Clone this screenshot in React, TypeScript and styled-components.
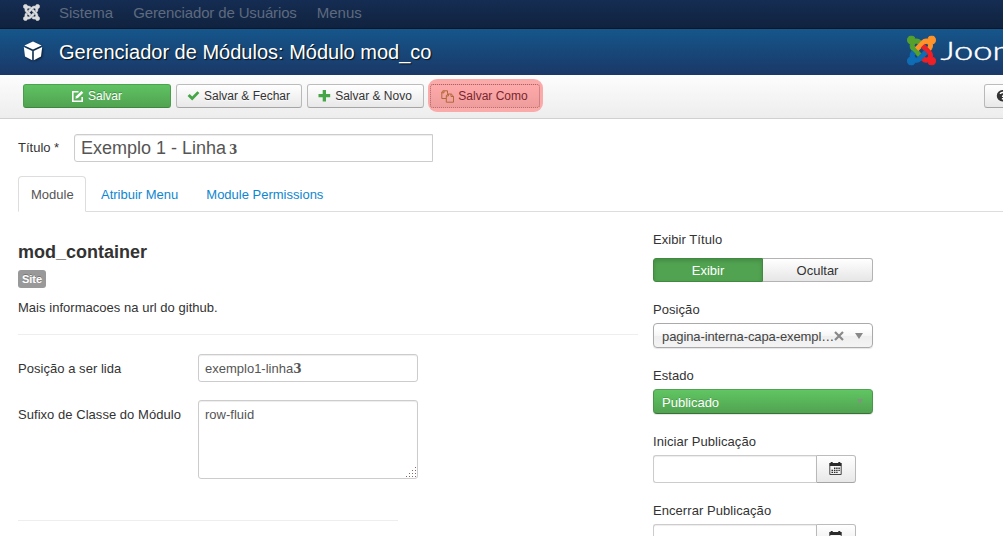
import React from 'react';
import styled, { createGlobalStyle, css } from 'styled-components';

const Global = createGlobalStyle`
  * { box-sizing: border-box; }
  html, body { margin: 0; height: 536px; overflow: hidden; background: #fff; }
  body { font: 13px/18px "Liberation Sans", Arial, sans-serif; color: #333; }
  #root { height: 536px; overflow: hidden; }
`;

const Page = styled.div`
  width: 1003px;
  height: 536px;
  overflow: hidden;
`;

const TopBar = styled.nav`
  display: flex;
  align-items: center;
  height: 29px;
  padding: 0 0 3px 23px;
  background: linear-gradient(#152d53, #10223e);
  border-bottom: 1px solid #0b1629;
  color: #5e6a7f;
  font-size: 15px;
`;

const BrandIcon = styled.svg`
  width: 17px;
  height: 17px;
  margin-right: 19px;
  fill: #dcdcdc;
  stroke: #dcdcdc;
  stroke-width: 10;
`;

const TopItem = styled.span<{ $tracking?: number }>`
  margin-right: 20px;
  letter-spacing: ${p => p.$tracking || 0}px;
  white-space: nowrap;
`;

const Header = styled.header`
  display: flex;
  align-items: center;
  height: 46px;
  padding-left: 23px;
  background: linear-gradient(#15568b, #1a3867);
  color: #fff;
`;

const HeaderIcon = styled.svg`
  width: 20px;
  height: 20px;
  margin: 0 16px 2px 0;
  filter: drop-shadow(1px 1px 1px rgba(0, 0, 0, 0.6));
`;

const PageTitle = styled.h1`
  flex: 1;
  margin: 0;
  font-size: 20px;
  line-height: 28px;
  font-weight: 400;
  text-shadow: 1px 1px 1px rgba(0, 0, 0, 0.8);
`;

const Logo = styled.svg`
  width: 97px;
  height: 36px;
  margin-bottom: 4px;
`;

const Toolbar = styled.div`
  display: flex;
  gap: 5px;
  height: 44px;
  padding: 9px 0 0 23px;
  background: linear-gradient(#fdfdfd, #ededed);
  border-bottom: 1px solid #d0d0d0;
`;

const Button = styled.button<{ $width: number; $primary?: boolean }>`
  display: flex;
  flex: none;
  align-items: center;
  justify-content: center;
  gap: 4px;
  width: ${p => p.$width}px;
  height: 24px;
  padding: 0 1px 0 0;
  border: 1px solid #b7b7b7;
  border-color: #bcbcbc #b9b9b9 #a5a5a5;
  border-radius: 3px;
  background: linear-gradient(#fff, #e8e8e8);
  color: #333;
  font: 12px/18px "Liberation Sans", Arial, sans-serif;
  white-space: nowrap;
  text-shadow: 0 1px 1px rgba(255, 255, 255, 0.75);
  ${p => p.$primary && css`
    border-color: #4da34d #4b9c4b #3d873d;
    background: linear-gradient(#5fc262, #51a351);
    color: #fff;
    text-shadow: 0 -1px 0 rgba(0, 0, 0, 0.25);
  `}
  svg { width: 13px; height: 13px; flex: none; }
`;

const Highlight = styled.div`
  flex: none;
  height: 33px;
  margin: -5px 0 0 -1px;
  padding: 5px 3px 4px 2px;
  border-radius: 9px;
  background: #fbaaaa;
  ${Button} {
    border: 1px dotted #a86464;
    background: linear-gradient(#ffaaaa, #ee9c9c);
    color: #79262e;
    text-shadow: none;
  }
`;

const HelpButton = styled(Button)`
  margin-left: auto;
  margin-right: -21px;
  justify-content: flex-start;
  padding-left: 11px;
`;

const TitleRow = styled.div`
  display: flex;
  align-items: center;
  height: 28px;
  margin: 15px 0 0 18px;
`;

const TitleLabel = styled.label`
  width: 56px;
`;

const Field = styled.div<{ $width: number; $height?: number; $large?: boolean }>`
  position: relative;
  flex: none;
  width: ${p => p.$width}px;
  height: ${p => p.$height || 28}px;
  padding: 5px 6px;
  border: 1px solid #ccc;
  border-radius: 3px;
  background: #fff;
  box-shadow: inset 0 1px 1px rgba(0, 0, 0, 0.075);
  color: #555;
  white-space: nowrap;
  ${p => p.$large && css`
    padding: 2px 6px;
    font-size: 18px;
    line-height: 22px;
    border-radius: 3px 0 0 3px;
  `}
`;

const Digit = styled.b<{ $size: number; $gap?: number }>`
  margin-left: ${p => p.$gap || 0}px;
  font-family: "DejaVu Serif", serif;
  font-size: ${p => p.$size}px;
  line-height: 1;
`;

const Tabs = styled.div`
  display: flex;
  height: 36px;
  margin: 14px 0 0 18px;
  border-bottom: 1px solid #ddd;
`;

const Tab = styled.a<{ $active?: boolean }>`
  height: 36px;
  padding: 9px 12px 8px;
  margin-right: 2px;
  border: 1px solid transparent;
  color: #0e86cf;
  ${p => p.$active && css`
    width: 68px;
    border-color: #ddd #ddd #fff;
    border-radius: 4px 4px 0 0;
    background: #fff;
    color: #555;
  `}
`;

const Columns = styled.main`
  display: flex;
  padding-left: 18px;
`;

const MainColumn = styled.section`
  width: 635px;
  padding-top: 29px;
`;

const ModuleName = styled.h3`
  margin: 0;
  font-size: 18px;
  line-height: 22px;
`;

const Badge = styled.span`
  display: block;
  width: 28px;
  height: 18px;
  margin-top: 7px;
  border-radius: 3px;
  background: #999;
  color: #fff;
  font-size: 11px;
  font-weight: 700;
  text-align: center;
  text-shadow: 0 -1px 0 rgba(0, 0, 0, 0.25);
`;

const Description = styled.p`
  margin: 11px 0 0;
  letter-spacing: 0.03px;
`;

const Rule = styled.hr<{ $width: number; $top: number }>`
  width: ${p => p.$width}px;
  height: 1px;
  margin: ${p => p.$top}px 0 0;
  border: 0;
  background: #eee;
`;

const FormRow = styled.div<{ $top: number }>`
  display: flex;
  margin-top: ${p => p.$top}px;
`;

const FormLabel = styled.label`
  width: 180px;
  padding-top: 6px;
  letter-spacing: 0.04px;
`;

const Grip = styled.svg`
  position: absolute;
  right: 0;
  bottom: 0;
  width: 11px;
  height: 11px;
`;

const SideColumn = styled.aside`
  width: 220px;
  padding-top: 19px;
`;

const Group = styled.div<{ $height: number }>`
  height: ${p => p.$height}px;
`;

const SideLabel = styled.label<{ $gap: number }>`
  display: block;
  margin-bottom: ${p => p.$gap}px;
  letter-spacing: 0.06px;
`;

const Switch = styled.div`
  display: flex;
`;

const SwitchOption = styled.div<{ $on?: boolean }>`
  width: 110px;
  height: 24px;
  border: 1px solid #b3b3b3;
  border-left: 0;
  border-radius: 0 3px 3px 0;
  background: linear-gradient(#fff, #e6e6e6);
  line-height: 23px;
  text-align: center;
  ${p => p.$on && css`
    border: 1px solid #3f8a3f;
    border-radius: 3px 0 0 3px;
    background: #51a351;
    box-shadow: inset 0 2px 4px rgba(0, 0, 0, 0.15);
    color: #fff;
  `}
`;

const Select = styled.div<{ $green?: boolean }>`
  display: flex;
  align-items: center;
  height: 25px;
  padding: 2px 8px 0;
  border: 1px solid #aaa;
  border-radius: 4px;
  background: linear-gradient(#fff 20%, #f6f6f6 50%, #eee 52%, #f4f4f4 100%);
  box-shadow: 0 1px 1px rgba(0, 0, 0, 0.1);
  color: #444;
  ${p => p.$green && css`
    border-color: #51a351 #489748 #387038;
    background: linear-gradient(#60c562, #51a351);
    color: #fff;
    text-shadow: 0 -1px 0 rgba(0, 0, 0, 0.15);
  `}
`;

const SelectText = styled.span<{ $tracking?: number }>`
  flex: none;
  padding-top: 1px;
  letter-spacing: ${p => p.$tracking || 0}px;
  white-space: nowrap;
`;

const ClearIcon = styled.svg`
  width: 10px;
  height: 10px;
  margin: 0 0 2px;
`;

const Arrow = styled.span<{ $muted?: boolean }>`
  margin: 0 1px 2px auto;
  border: ${p => (p.$muted ? 3 : 4)}px solid transparent;
  border-top: ${p => (p.$muted ? '5px solid #7f957c' : '6px solid #888')};
  border-bottom: 0;
`;

const DateField = styled.div`
  display: flex;
  ${Field} { border-radius: 3px 0 0 3px; border-right: 0; }
  ${Button} { height: 28px; padding: 0 2px 2px 0; border-radius: 0 3px 3px 0; }
`;

const joomlaParts = [
  { color: '#56a12b', d: 'M.6 92.1C.6 58.8 27.4 32 60.4 32c30 0 54.5 21.9 59.2 50.2 32.6-7.6 67.1.6 96.5 30l-44.3 44.3c-20.5-20.5-42.6-16.3-55.4-3.5-14.3 14.3-14.3 37.9 0 52.2l99.5 99.5-44 44.3c-87.7-87.2-49.7-49.7-99.8-99.7-26.8-26.5-35-64.8-24.8-98.9C20.4 144.6.6 120.7.6 92.1z' },
  { color: '#ff9329', d: 'M130.1 208.5l44.3 44.3c10-10 89.7-89.7 99.7-99.8 14.3-14.3 37.6-14.3 51.9 0 12.8 12.8 17 35-3.5 55.4l44 44.3c31.2-31.2 38.5-67.6 28.9-101.2 29.2-4.1 51.9-29.2 51.9-59.5 0-33.2-26.8-60.1-59.8-60.1-30.3 0-55.4 22.5-59.5 51.6-33.8-9.9-71.7-1.5-98.3 25.1-18.3 19.1-71.1 71.5-99.6 99.9z' },
  { color: '#ed2025', d: 'M396.4 360.7c8.2-32.7-.9-68.5-26.3-93.9-11.8-12.2 5 4.7-99.5-99.7l-44.3 44.3 99.7 99.7c14.3 14.3 14.3 37.6 0 51.9-12.8 12.8-35 17-55.4-3.5l-44 44.3c27.6 30.2 68 38.8 102.7 28 5.5 27.4 29.7 48.1 58.9 48.1 33 0 59.8-26.8 59.8-60.1 0-30.2-22.5-55-51.6-59.1z' },
  { color: '#0f6db5', d: 'M312.1 307.6l-44-44.3c-87 86.4-50.4 50.4-99.7 99.8-14.3 14.3-37.6 14.3-51.9 0-13.1-13.4-16.9-35.3 3.2-55.4l-44-44.3c-30.2 30.2-38 65.2-29.5 98.3-26.7 6-46.2 29.9-46.2 58.2C0 453.2 26.8 480 59.8 480c28.6 0 52.5-19.8 58.6-46.7 32.7 8.2 68.5-.6 94.2-26 32.1-32 12.2-12.4 99.5-99.7z' },
];

const EditIcon = () => (
  <svg viewBox="0 0 13 13" fill="none" stroke="#fff">
    <path d="M7.5 1.8H1.8v9.4h9.4V7" strokeWidth="1.6" />
    <path d="M4.4 8.8l.6-2.5L10.5.9l1.8 1.8-5.4 5.4z" fill="#fff" stroke="none" />
  </svg>
);

const CheckIcon = () => (
  <svg viewBox="0 0 13 13"><path d="M.6 6l2.1-2 2.5 2.4L10.4 1.2l2 1.9-7.2 7.5z" fill="#46a546" /></svg>
);

const PlusIcon = () => (
  <svg viewBox="0 0 13 13"><path d="M4.7 0h3.3v4.1h4.2v3.2H8v4.1H4.7V7.3H.5V4.1h4.2z" fill="#46a546" /></svg>
);

const CopyIcon = () => (
  <svg viewBox="0 0 13 13" fill="none" stroke="#b06a35">
    <path d="M5 8.5H.8V1.9L2 .8h4.5v3M3 .8v2H.8" />
    <path d="M7 4h3.3l2.2 2.2v6H5.3V5.6zM10 4v2.5h2.5M7.4 4v2H5.3" />
  </svg>
);

const CalendarIcon = () => (
  <svg viewBox="0 0 13 13" fill="#2b2b2b">
    <path d="M.3 1h1.4V0h2v1h5.6V0h2v1h1.4v3H.3z" />
    <path d="M.8 4v8.5h11.4V4" fill="none" stroke="#333" strokeWidth=".9" />
    <path d="M5 5.5h1.4V7H5zM7.2 5.5h1.4V7H7.2zM9.4 5.5h1.4V7H9.4zM2.5 7.7h1.6v1.2H2.5zM5 7.7h1.4v1.2H5zM7.2 7.7h1.4v1.2H7.2zM9.4 7.7h1.4v1.2H9.4zM2.5 9.7h1.6v1.3H2.5zM5 9.7h1.4v1.3H5zM7.2 9.7h1.4v1.3H7.2z" />
  </svg>
);

const DateInput = () => (
  <DateField>
    <Field $width={163} />
    <Button $width={40}><CalendarIcon /></Button>
  </DateField>
);

const gripDots = [[9, 0], [6, 3], [9, 3], [3, 6], [6, 6], [9, 6], [0, 9], [3, 9], [6, 9], [9, 9]];

export default function App() {
  return (
    <Page>
      <Global />
      <TopBar>
        <BrandIcon viewBox="-6 26 460 460">
          {joomlaParts.map(p => <path key={p.color} d={p.d} />)}
        </BrandIcon>
        <TopItem>Sistema</TopItem>
        <TopItem $tracking={-0.14}>Gerenciador de Usuários</TopItem>
        <TopItem>Menus</TopItem>
      </TopBar>
      <Header>
        <HeaderIcon viewBox="0 0 20 20" fill="#fff">
          <path d="M10 .5l8.6 4L10 8.6 1.4 4.5zM.8 6l8.4 3.9v9.3L2 15.6zM19.2 6l-8.4 3.9v9.3l7.2-3.6z" />
        </HeaderIcon>
        <PageTitle>Gerenciador de Módulos: Módulo mod_co</PageTitle>
        <Logo viewBox="0 0 97 36">
          <svg x="1" y="3.5" width="29" height="30" viewBox="-8 24 464 464" preserveAspectRatio="none">
            {joomlaParts.map(p => <path key={p.color} d={p.d} fill={p.color} stroke={p.color} strokeWidth="16" />)}
          </svg>
          <text
            transform="translate(34.5 28) scale(1.38 1)"
            fontFamily="Lato, sans-serif"
            fontWeight="300"
            fontSize="25"
            fill="#fff"
            stroke="#fff"
            strokeWidth="0.4"
          >
            Joom
          </text>
        </Logo>
      </Header>
      <Toolbar>
        <Button $width={148} $primary><EditIcon />Salvar</Button>
        <Button $width={126}><CheckIcon />Salvar &amp; Fechar</Button>
        <Button $width={117}><PlusIcon />Salvar &amp; Novo</Button>
        <Highlight><Button $width={110}><CopyIcon />Salvar Como</Button></Highlight>
        <HelpButton $width={40}>
          <svg viewBox="0 0 13 13">
            <circle cx="6.5" cy="5.7" r="5.7" fill="#333" />
            <path d="M4.4 4c0-2 4.2-2 4.2.2 0 1.4-2 1.3-2 2.7M6.6 8v1.5" fill="none" stroke="#fff" strokeWidth="1.5" />
          </svg>
        </HelpButton>
      </Toolbar>
      <TitleRow>
        <TitleLabel>Título *</TitleLabel>
        <Field $width={359} $large>Exemplo 1 - Linha<Digit $size={12} $gap={3}>3</Digit></Field>
      </TitleRow>
      <Tabs>
        <Tab $active>Module</Tab>
        <Tab>Atribuir Menu</Tab>
        <Tab>Module Permissions</Tab>
      </Tabs>
      <Columns>
        <MainColumn>
          <ModuleName>mod_container</ModuleName>
          <Badge>Site</Badge>
          <Description>Mais informacoes na url do github.</Description>
          <Rule $width={620} $top={17} />
          <FormRow $top={19}>
            <FormLabel>Posição a ser lida</FormLabel>
            <Field $width={220}>exemplo1-linha<Digit $size={12}>3</Digit></Field>
          </FormRow>
          <FormRow $top={18}>
            <FormLabel>Sufixo de Classe do Módulo</FormLabel>
            <Field $width={220} $height={79}>
              row-fluid
              <Grip viewBox="0 0 11 11">
                {gripDots.map(([x, y]) => <rect key={`${x}-${y}`} x={x} y={y} width="1" height="1" fill="#866" />)}
              </Grip>
            </Field>
          </FormRow>
          <Rule $width={380} $top={41} />
        </MainColumn>
        <SideColumn>
          <Group $height={70}>
            <SideLabel $gap={9}>Exibir Título</SideLabel>
            <Switch>
              <SwitchOption $on>Exibir</SwitchOption>
              <SwitchOption>Ocultar</SwitchOption>
            </Switch>
          </Group>
          <Group $height={66}>
            <SideLabel $gap={4}>Posição</SideLabel>
            <Select>
              <SelectText $tracking={-0.1}>pagina-interna-capa-exempl…</SelectText>
              <ClearIcon viewBox="0 0 10 10"><path d="M1 1l8 8M9 1L1 9" stroke="#888" strokeWidth="2.2" /></ClearIcon>
              <Arrow />
            </Select>
          </Group>
          <Group $height={66}>
            <SideLabel $gap={4}>Estado</SideLabel>
            <Select $green><SelectText>Publicado</SelectText><Arrow $muted /></Select>
          </Group>
          <Group $height={69}>
            <SideLabel $gap={4}>Iniciar Publicação</SideLabel>
            <DateInput />
          </Group>
          <Group $height={69}>
            <SideLabel $gap={4}>Encerrar Publicação</SideLabel>
            <DateInput />
          </Group>
        </SideColumn>
      </Columns>
    </Page>
  );
}
